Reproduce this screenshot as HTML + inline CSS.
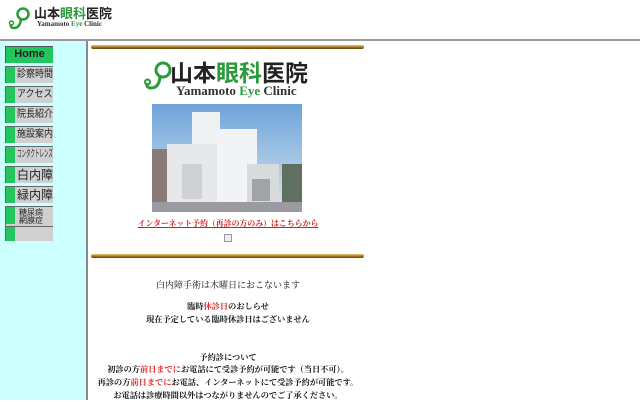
<!DOCTYPE html>
<html><head><meta charset="utf-8"><style>
*{margin:0;padding:0;box-sizing:border-box}
body{width:640px;height:400px;overflow:hidden;background:#fff;position:relative;font-family:"Liberation Serif","Noto Serif CJK SC",serif}
.a{position:absolute}
.nav{position:absolute;left:5px;width:48px;height:17px;background:#d0d0d0;border-top:1px solid #666;border-left:1px solid #666;font-family:"Liberation Sans","Noto Sans CJK JP",sans-serif;font-size:10px;line-height:16px;color:#222;overflow:hidden}
.nav:before{content:"";position:absolute;left:0;top:0;width:9px;height:17px;background:#22c55e}
.nav span{position:absolute;left:11px;top:0;white-space:nowrap;transform-origin:0 50%}
.gold{position:absolute;left:91px;width:273px;height:4px;background:linear-gradient(#e8c870,#a07010 60%,#604008);border-radius:2px}
.t{position:absolute;left:60px;width:336px;text-align:center;font-size:9px;color:#111;line-height:13px;white-space:nowrap}
.b{font-weight:bold;font-size:8.2px}
.r{color:#e02020}
</style></head><body>
<svg class="a" style="left:8px;top:6px" width="24" height="26" viewBox="0 0 24 26"><circle cx="15" cy="8" r="5.5" fill="none" stroke="#2a9a3a" stroke-width="2.5"/><path d="M13 13 Q12 22 6 22 Q2 22 3 18" fill="none" stroke="#2a9a3a" stroke-width="2.5"/><circle cx="3.5" cy="17" r="2" fill="none" stroke="#2a9a3a" stroke-width="1.5"/></svg>
<div class="a" style="left:34px;top:6px;font-family:'Liberation Sans','Noto Sans CJK JP',sans-serif;font-weight:bold;font-size:13px;line-height:15px;color:#222">山本<span style="color:#2a9a3a">眼科</span>医院</div>
<div class="a" style="left:37px;top:20px;font-size:7px;font-weight:bold;color:#333;line-height:8px">Yamamoto <span style="color:#2a9a3a">Eye</span> Clinic</div>
<div class="a" style="left:0;top:39px;width:640px;height:2px;background:#999"></div>
<div class="a" style="left:0;top:41px;width:86px;height:359px;background:#ccffff"></div>
<div class="a" style="left:86px;top:41px;width:2px;height:359px;background:#888"></div>
<div class="a" style="left:5px;top:46px;width:48px;height:17px;background:#22c55e;border-top:1px solid #555;border-left:1px solid #555;font-family:'Liberation Sans',sans-serif;font-weight:bold;font-size:11px;text-align:center;line-height:15px;color:#222">Home</div>
<div class="nav" style="top:66px"><span style="transform:scaleX(0.9)">診察時間</span></div>
<div class="nav" style="top:86px"><span style="transform:scaleX(0.9)">アクセス</span></div>
<div class="nav" style="top:106px"><span style="transform:scaleX(0.9)">院長紹介</span></div>
<div class="nav" style="top:126px"><span style="transform:scaleX(0.9)">施設案内</span></div>
<div class="nav" style="top:146px"><span style="transform:scaleX(0.45)">コンタクトレンズ</span></div>
<div class="nav" style="top:166px;font-size:12px"><span>白内障</span></div>
<div class="nav" style="top:186px;font-size:12px"><span>緑内障</span></div>
<div class="nav" style="top:206px;height:20px;font-size:8px;line-height:8px"><span style="top:2px;left:13px">糖尿病<br>網膜症</span></div>
<div class="nav" style="top:226px;height:15px"></div>
<div class="gold" style="top:45px"></div>
<svg class="a" style="left:143px;top:60px" width="30" height="34" viewBox="0 0 30 34"><circle cx="20" cy="10" r="7" fill="none" stroke="#2a9a3a" stroke-width="3"/><path d="M17 17 Q16 28 8 28 Q3 28 4 23" fill="none" stroke="#2a9a3a" stroke-width="3"/><circle cx="4.5" cy="22" r="2.5" fill="none" stroke="#2a9a3a" stroke-width="2"/></svg>
<div class="a" style="left:170px;top:60px;font-family:'Liberation Sans','Noto Sans CJK JP',sans-serif;font-weight:bold;font-size:23px;line-height:26px;color:#222">山本<span style="color:#2a9a3a">眼科</span>医院</div>
<div class="a" style="left:176px;top:84px;font-size:13px;font-weight:bold;color:#333;line-height:14px">Yamamoto <span style="color:#2a9a3a">Eye</span> Clinic</div>
<svg class="a" style="left:152px;top:104px" width="150" height="108" viewBox="0 0 150 108">
<defs><linearGradient id="s" x1="0" y1="0" x2="0" y2="1"><stop offset="0" stop-color="#6fa3d8"/><stop offset="1" stop-color="#d5e6f3"/></linearGradient></defs>
<rect width="150" height="108" fill="url(#s)"/>
<rect x="0" y="45" width="20" height="55" fill="#8a7a78"/>
<rect x="130" y="60" width="20" height="40" fill="#607060"/>
<rect x="40" y="8" width="28" height="40" fill="#eef0f2"/>
<rect x="15" y="40" width="80" height="60" fill="#e6e8ea"/>
<rect x="65" y="25" width="40" height="75" fill="#f2f3f5"/>
<rect x="95" y="60" width="32" height="40" fill="#d8dadc"/>
<rect x="30" y="60" width="20" height="35" fill="#cfd2d5"/>
<rect x="100" y="75" width="18" height="22" fill="#a0a4a8"/>
<rect x="0" y="98" width="150" height="10" fill="#9a9aa0"/>
</svg>
<div class="t" style="top:217px;font-size:7.9px;color:#d02020;font-weight:bold;text-decoration:underline">インターネット予約（再診の方のみ）はこちらから</div>
<div class="a" style="left:224px;top:234px;width:8px;height:8px;border:1px solid #999;background:#eee"></div>
<div class="gold" style="top:254px"></div>
<div class="t" style="top:279px">白内障手術は木曜日におこないます</div>
<div class="t b" style="top:300px">臨時<span class="r">休診日</span>のおしらせ</div>
<div class="t b" style="top:313px">現在予定している臨時休診日はございません</div>
<div class="t b" style="top:351px">予約診について</div>
<div class="t b" style="top:363px">初診の方<span class="r">前日までに</span>お電話にて受診予約が可能です（当日不可）。</div>
<div class="t b" style="top:376px">再診の方<span class="r">前日までに</span>お電話、インターネットにて受診予約が可能です。</div>
<div class="t b" style="top:389px">お電話は診療時間以外はつながりませんのでご了承ください。</div>
</body></html>
